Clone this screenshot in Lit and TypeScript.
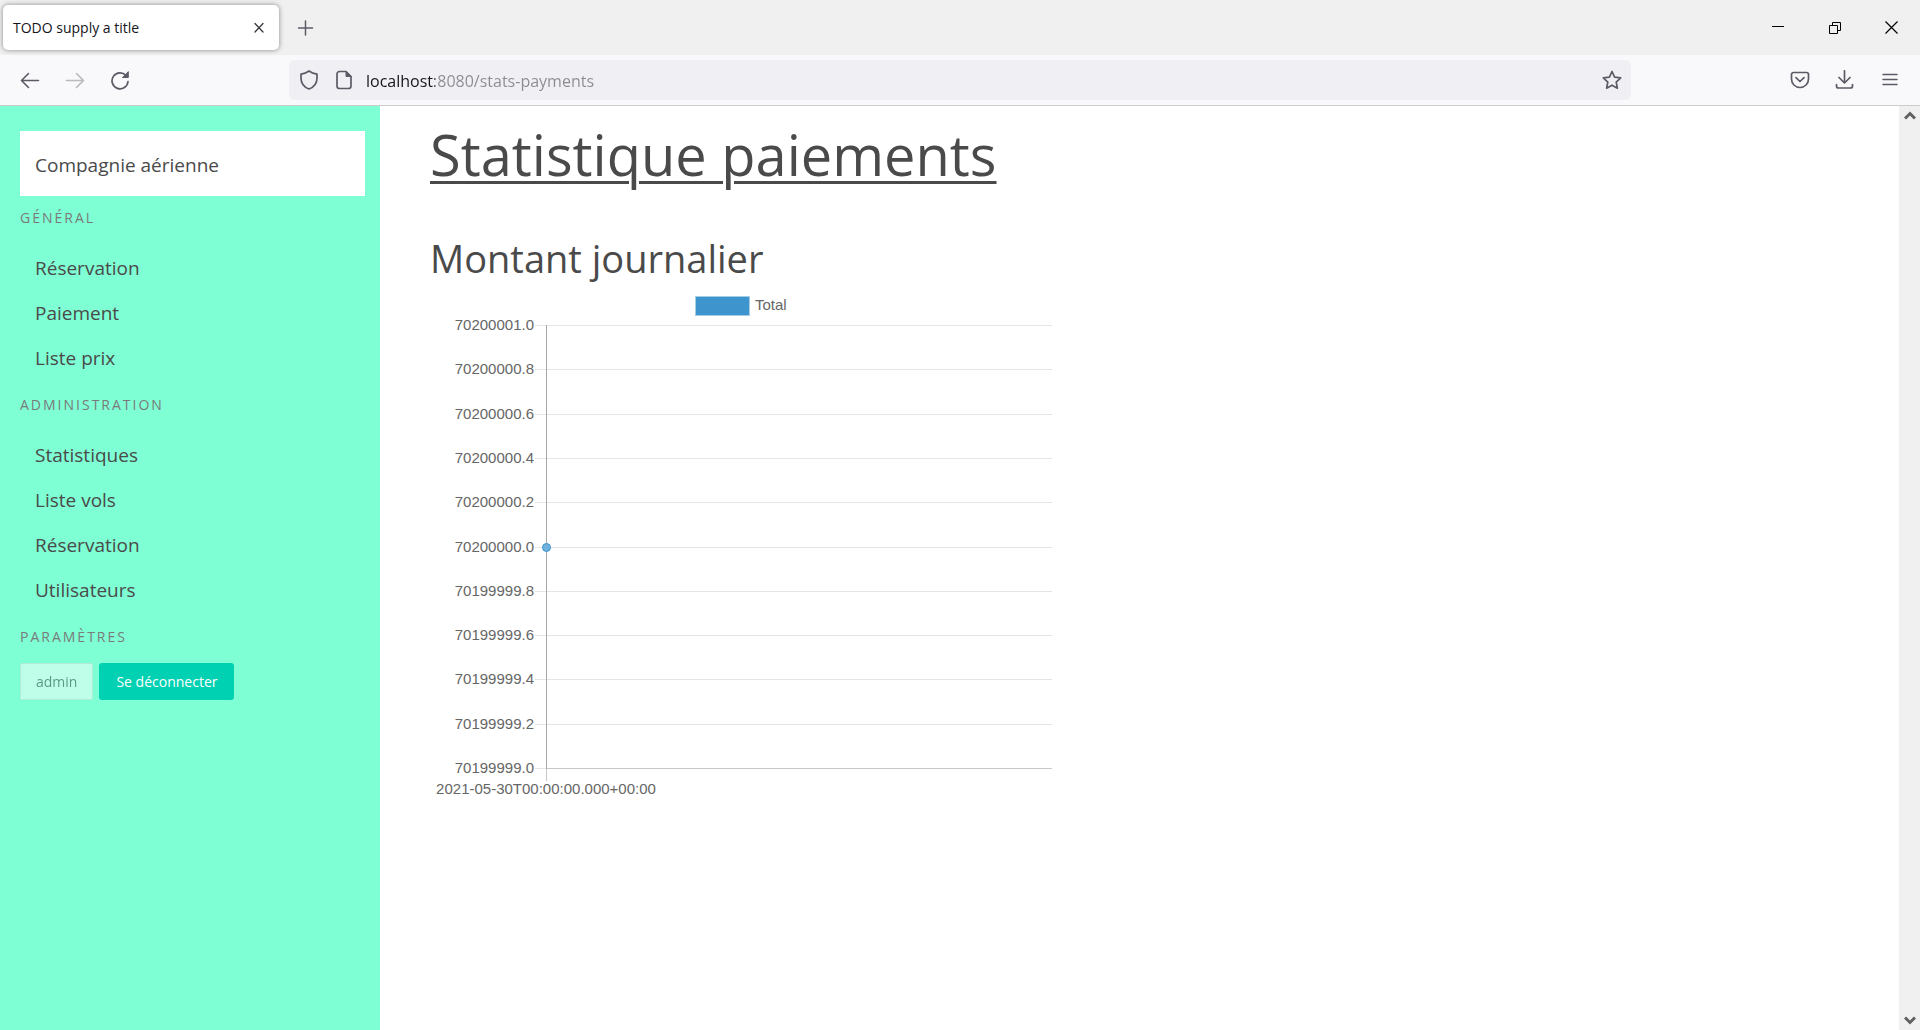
import { LitElement, html, css, svg } from "lit";
import { customElement } from "lit/decorators.js";

const STEPS = [
  "70200001.0", "70200000.8", "70200000.6", "70200000.4", "70200000.2", "70200000.0",
  "70199999.8", "70199999.6", "70199999.4", "70199999.2", "70199999.0",
];

const icon = (size: number, body: unknown) =>
  html`<svg width=${size} height=${size} viewBox="0 0 ${size} ${size}" fill="none" aria-hidden="true">${body}</svg>`;

@customElement("browser-bar")
class BrowserBar extends LitElement {
  static styles = css`
    :host { display: block; flex: none; color: #5b5b66; font-family: "Open Sans", "Noto Sans", sans-serif; }
    button { border: 0; padding: 0; margin: 0; background: none; color: inherit; display: flex; align-items: center; justify-content: center; }
    svg { display: block; stroke: currentColor; stroke-width: 2; stroke-linecap: round; stroke-linejoin: round; }
    .tabs { height: 55px; background: #f0f0f0; display: flex; align-items: center; }
    .tab { width: 276px; height: 45px; box-sizing: border-box; margin-left: 3px; padding: 0 10px; border-radius: 5px; background: #fff; box-shadow: 0 0 5px rgba(0, 0, 0, 0.45); display: flex; align-items: center; color: #15141a; font-size: 14px; }
    .tab-title { flex: 1; }
    .tab-close { width: 20px; height: 20px; color: #3a3a42; }
    .new-tab { width: 40px; height: 40px; margin-left: 6px; }
    .window { margin-left: auto; display: flex; color: #000; }
    .window button { width: 57px; height: 40px; }
    .window svg { stroke-width: 1; stroke-linecap: butt; stroke-linejoin: miter; }
    .tools { height: 50px; background: #f9f9fb; border-bottom: 1px solid #ccccd0; display: grid; grid-template-columns: 289px 1fr 289px; align-items: center; }
    .group { display: flex; gap: 5px; padding: 0 10px; }
    .group button { width: 40px; height: 40px; }
    .end { justify-content: flex-end; }
    .off { opacity: 0.4; }
    .address { height: 40px; border-radius: 5px; background: #f0eff4; display: flex; align-items: center; padding: 0 9px 0 10px; }
    .address button { width: 20px; height: 20px; flex: none; }
    .page-info { margin: 0 12px 0 15px; }
    .url { flex: 1; min-width: 0; border: 0; padding: 2px 0 0; outline: 0; height: 32px; font: 16px/32px "Open Sans", "Noto Sans", sans-serif; color: #15141a; background: linear-gradient(90deg, #15141a 69px, #8b8b92 69px); -webkit-background-clip: text; background-clip: text; -webkit-text-fill-color: transparent; }
  `;
  render() {
    return html`
      <div class="tabs">
        <div class="tab">
          <span class="tab-title">TODO supply a title</span>
          <button class="tab-close" aria-label="Fermer l’onglet">${icon(20, svg`<path stroke-width="1.3" d="M6 5.500l8 8.500M14 5.500l-8 8.500"/>`)}</button>
        </div>
        <button class="new-tab" aria-label="Nouvel onglet">${icon(20, svg`<path stroke-width="1.5" d="M10.500 3v14M3.500 10h14"/>`)}</button>
        <div class="window">
          <button aria-label="Réduire">${icon(20, svg`<path d="M4 8.500h12"/>`)}</button>
          <button aria-label="Restaurer">${icon(20, svg`<path d="M4.500 7.500h8v8h-8zM7.500 7.500v-3h8v8h-3"/>`)}</button>
          <button aria-label="Fermer">${icon(20, svg`<path stroke-width="1.2" d="M3.500 3.500l12 12M15.500 3.500l-12 12"/>`)}</button>
        </div>
      </div>
      <div class="tools">
        <div class="group">
          <button aria-label="Précédent">${icon(20, svg`<path stroke-width="1.6" d="M18.500 10.500H2M8.500 3.500l-7 7 7 7"/>`)}</button>
          <button class="off" aria-label="Suivant" disabled>${icon(20, svg`<path stroke-width="1.6" d="M1.500 10.500H18M11.500 3.500l7 7-7 7"/>`)}</button>
          <button aria-label="Actualiser">${icon(20, svg`<path stroke-width="1.7" d="M18 11.500A8 8 0 1 1 16 5.500"/><path stroke-width="1" fill="currentColor" d="M18.300 2v5.500h-5.500z"/>`)}</button>
        </div>
        <div class="address">
          <button aria-label="Protection">${icon(20, svg`<path stroke-width="1.7" d="M10 1c2.300 1.600 4.800 2.600 8 3.200v3.800c0 5-3 9.200-8 11-5-1.800-8-6-8-11V4.200C5.200 3.600 7.700 2.600 10 1z"/>`)}</button>
          <button class="page-info" aria-label="Informations sur la page">${icon(20, svg`<path stroke-width="1.7" d="M12 1.500H5.500a2.500 2.500 0 0 0-2.500 2.500v12a2.500 2.500 0 0 0 2.500 2.500h9a2.500 2.500 0 0 0 2.500-2.500V6.500z"/><path stroke-width="1" fill="currentColor" d="M12 1.500v5h5z"/>`)}</button>
          <input class="url" type="text" aria-label="Adresse" spellcheck="false" .value=${"localhost:8080/stats-payments"} />
          <button aria-label="Ajouter aux favoris">${icon(20, svg`<path stroke-width="1.7" d="M10 1.500l2.600 5.600 6.100.8-4.500 4.200 1.200 6.100-5.400-3-5.400 3 1.200-6.100L1.300 7.900l6.100-.8z"/>`)}</button>
        </div>
        <div class="group end">
          <button aria-label="Pocket">${icon(20, svg`<path stroke-width="1.7" d="M3.500 2.500h13A2 2 0 0 1 18.500 4.500v4.500a8.500 8.500 0 0 1-17 0V4.500a2 2 0 0 1 2-2z"/><path stroke-width="1.7" d="M6 7.700l4 3.800 4-3.800"/>`)}</button>
          <button aria-label="Téléchargements">${icon(20, svg`<path stroke-width="1.7" d="M9.500 0.800v12M4 7.500l5.500 5.500L15 7.500M1.500 14.500v1.500a2 2 0 0 0 2 2h12a2 2 0 0 0 2-2v-1.500"/>`)}</button>
          <button aria-label="Menu">${icon(20, svg`<path stroke-width="1.5" d="M3 4.500h14M3 9.500h14M3 14.500h14"/>`)}</button>
        </div>
      </div>
    `;
  }
}

@customElement("side-menu")
class SideMenu extends LitElement {
  static styles = css`
    :host { display: block; flex: 0 0 380px; box-sizing: border-box; padding: 25px 15px 25px 20px; background: #7fffd4; color: #4a4a4a; font-family: "Open Sans", "Noto Sans", sans-serif; font-size: 19px; }
    a { display: block; padding: 0 15px; line-height: 45px; color: inherit; text-decoration: none; }
    .brand { background: #fff; padding: 12px 15px 8px; }
    .label { margin: 12px 0 18px; font-size: 14px; line-height: 20px; font-weight: 400; letter-spacing: 2px; text-transform: uppercase; color: #7a7a7a; }
    .list { list-style: none; margin: 0; padding: 0 0 2px; }
    .buttons { display: flex; gap: 6px; margin-top: -2px; }
    .buttons button { height: 37px; padding: 0 15px; border: 1px solid #dbdbdb; border-radius: 2px; background: #fff; color: #363636; font: 14px "Open Sans", "Noto Sans", sans-serif; }
    .buttons button:disabled { opacity: 0.5; }
    .buttons .primary { border-color: transparent; background: #00d1b2; color: #fff; padding: 0 16px; border-radius: 3px; }
  `;
  private list(items: string[]) {
    return html`<ul class="list">${items.map((i) => html`<li><a href="#">${i}</a></li>`)}</ul>`;
  }
  render() {
    return html`
      <a class="brand" href="#">Compagnie aérienne</a>
      <h3 class="label">Général</h3>
      ${this.list(["Réservation", "Paiement", "Liste prix"])}
      <h3 class="label">Administration</h3>
      ${this.list(["Statistiques", "Liste vols", "Réservation", "Utilisateurs"])}
      <h3 class="label">Paramètres</h3>
      <div class="buttons">
        <button disabled>admin</button>
        <button class="primary">Se déconnecter</button>
      </div>
    `;
  }
}

@customElement("payments-chart")
class PaymentsChart extends LitElement {
  static styles = css`
    :host { display: block; max-width: 622px; }
    svg { display: block; width: 100%; }
    text { font-family: "Liberation Sans", Arial, sans-serif; font-size: 15px; fill: #666; }
    .grid { stroke: #e5e5e5; }
    .axis { stroke: #a8a8a8; }
    .base { stroke: #c8c8c8; }
    .key { fill: #3e95cd; stroke: #a4cde8; }
    .point { fill: #6fb1dc; stroke: #3e95cd; }
  `;
  render() {
    const y = (i: number) => Math.round(35 + i * 44.3) + 0.5;
    return html`
      <svg viewBox="0 0 622 515" role="img" aria-label="Montant journalier">
        <rect class="key" x="265.500" y="6.500" width="54" height="19" />
        <text x="325" y="20">Total</text>
        ${STEPS.map((s, i) => svg`
          <line class="grid" x1="105" x2="622" y1=${y(i)} y2=${y(i)} />
          <text x="104" y=${y(i) + 4.5} text-anchor="end">${s}</text>`)}
        <line class="base" x1="116" x2="622" y1=${y(10)} y2=${y(10)} />
        <line class="axis" x1="116.500" x2="116.500" y1="35" y2="479" />
        <line class="base" x1="116.500" x2="116.500" y1="479" y2="491" />
        <circle class="point" cx="116.500" cy=${y(5)} r="4" />
        <text x="116" y="504" text-anchor="middle">2021-05-30T00:00:00.000+00:00</text>
      </svg>
    `;
  }
}

@customElement("app-root")
class AppRoot extends LitElement {
  static styles = css`
    :host { display: flex; flex-direction: column; min-height: 100vh; background: #fff; color: #4a4a4a; font-family: "Open Sans", "Noto Sans", sans-serif; }
    .body { flex: 1; display: flex; }
    .main { flex: 1; min-width: 0; padding: 10px 50px 40px; }
    h1, h2 { margin: 0; font-weight: 400; }
    h1 { font-size: 56px; line-height: 76px; text-decoration: underline; text-decoration-thickness: 3px; text-underline-offset: 5px; }
    h2 { margin: 36px 0 2px; font-size: 38px; line-height: 60px; }
    .scroll { flex: 0 0 21px; background: #f0f0f0; display: flex; flex-direction: column; justify-content: space-between; }
    .scroll button { border: 0; padding: 0; background: none; height: 20px; display: flex; align-items: center; justify-content: center; }
    .scroll svg { stroke: #606060; stroke-width: 3; }
  `;
  render() {
    return html`
      <browser-bar></browser-bar>
      <div class="body">
        <side-menu></side-menu>
        <main class="main">
          <h1>Statistique paiements</h1>
          <h2>Montant journalier</h2>
          <payments-chart></payments-chart>
        </main>
        <div class="scroll">
          <button aria-label="Défiler vers le haut">${icon(12, svg`<path d="M1 8.500l5-5 5 5"/>`)}</button>
          <button aria-label="Défiler vers le bas">${icon(12, svg`<path d="M1 3.500l5 5 5-5"/>`)}</button>
        </div>
      </div>
    `;
  }
}
